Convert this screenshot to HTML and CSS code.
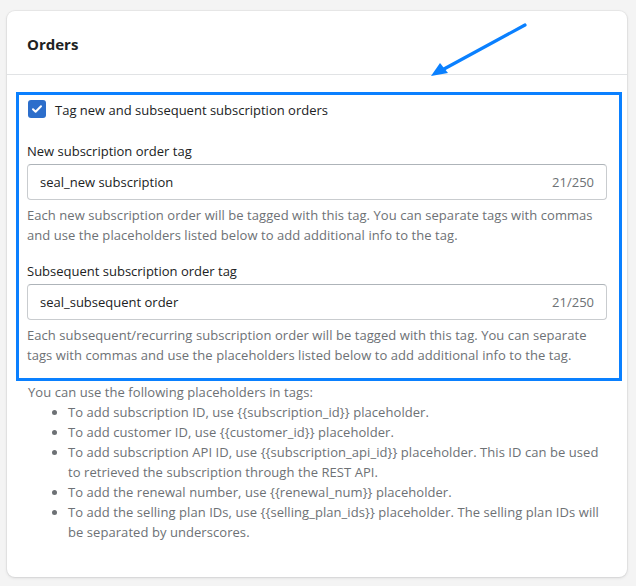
FILE: index.html
```html
<!DOCTYPE html>
<html>
<head>
<meta charset="utf-8">
<link rel="stylesheet" href="styles.css">
</head>
<body>
<div class="card">
  <div class="card-header"><h2 class="title">Orders</h2></div>
  <div class="card-body">
    <div class="highlight">
      <label class="check-row">
        <span class="checkbox"><svg viewBox="0 0 18 18" width="18" height="18"><path d="M5 9.3l2.6 2.5L13 6.3" fill="none" stroke="#fff" stroke-width="2" stroke-linecap="round" stroke-linejoin="round"/></svg></span>
        <span class="check-label">Tag new and subsequent subscription orders</span>
      </label>
      <div class="field">
        <div class="field-label">New subscription order tag</div>
        <div class="input"><span class="input-value">seal_new subscription</span><span class="counter">21/250</span></div>
        <div class="help">Each new subscription order will be tagged with this tag. You can separate tags with commas and use the placeholders listed below to add additional info to the tag.</div>
      </div>
      <div class="field">
        <div class="field-label">Subsequent subscription order tag</div>
        <div class="input"><span class="input-value">seal_subsequent order</span><span class="counter">21/250</span></div>
        <div class="help">Each subsequent/recurring subscription order will be tagged with this tag. You can separate tags with commas and use the placeholders listed below to add additional info to the tag.</div>
      </div>
    </div>
    <div class="placeholders">
      <div>You can use the following placeholders in tags:</div>
      <ul class="ph-list">
        <li>To add subscription ID, use {{subscription_id}} placeholder.</li>
        <li>To add customer ID, use {{customer_id}} placeholder.</li>
        <li>To add subscription API ID, use {{subscription_api_id}} placeholder. This ID can be used to retrieved the subscription through the REST API.</li>
        <li>To add the renewal number, use {{renewal_num}} placeholder.</li>
        <li>To add the selling plan IDs, use {{selling_plan_ids}} placeholder. The selling plan IDs will be separated by underscores.</li>
      </ul>
    </div>
  </div>
</div>
<svg class="arrow" width="636" height="100" viewBox="0 0 636 100">
  <line x1="525" y1="25" x2="444" y2="69" stroke="#0a80ff" stroke-width="3.2" stroke-linecap="round"/>
  <polygon points="431,76 440,63 448,73" fill="#0a80ff"/>
</svg>
</body>
</html>
```
FILE: styles.css
```css
html, body {
  margin: 0;
  padding: 0;
}
body {
  background: #f4f4f4;
  font-family: "Open Sans", "Noto Sans", sans-serif;
  font-size: 13px;
  color: #202223;
  position: relative;
  width: 636px;
  height: 586px;
  overflow: hidden;
}
.card {
  position: relative;
  margin: 11px 0 0 7px;
  width: 620px;
  height: 566px;
  background: #fff;
  border-radius: 8px;
  box-shadow: 0 0 0 1px rgba(63,63,68,0.05), 0 1px 3px rgba(63,63,68,0.15);
}
.card-header {
  height: 64px;
  padding: 0 20px;
  display: flex;
  align-items: center;
  border-bottom: 1px solid #e1e3e5;
  box-sizing: border-box;
}
.title {
  margin: 0;
  font-size: 15px;
  font-weight: 700;
  line-height: 20px;
  padding-top: 2px;
}
.card-body {
  padding: 17px 20px 20px 20px;
}
.highlight {
  border: 3px solid #0a80ff;
  margin: 0 -15px 0 -11px;
  padding: 5px 12px 13px 8px;
}
.check-row {
  display: flex;
  align-items: center;
  gap: 9px;
  height: 18px;
  padding-left: 1px;
}
.checkbox {
  width: 18px;
  height: 18px;
  border-radius: 3px;
  background: #2c6ecb;
  display: flex;
}
.check-label {
  line-height: 20px;
  padding-top: 2px;
}
.field {
  margin-top: 23px;
}
.field + .field {
  margin-top: 16px;
}
.field-label {
  line-height: 20px;
  margin-bottom: 3px;
}
.input {
  height: 36px;
  box-sizing: border-box;
  border: 1px solid #c9cccf;
  border-top-color: #aeb4b9;
  border-radius: 4px;
  display: flex;
  align-items: center;
  justify-content: space-between;
  padding: 0 12px;
}
.counter {
  color: #6d7175;
}
.help {
  color: #6d7175;
  line-height: 20px;
  margin-top: 5px;
  letter-spacing: 0.06px;
}
.placeholders {
  color: #6d7175;
  line-height: 20px;
  margin-top: 1px;
  padding-left: 1px;
  letter-spacing: 0.06px;
}
.ph-list {
  margin: 0;
  padding-left: 40px;
}
.arrow {
  position: absolute;
  left: 0;
  top: 0;
  pointer-events: none;
}
```
